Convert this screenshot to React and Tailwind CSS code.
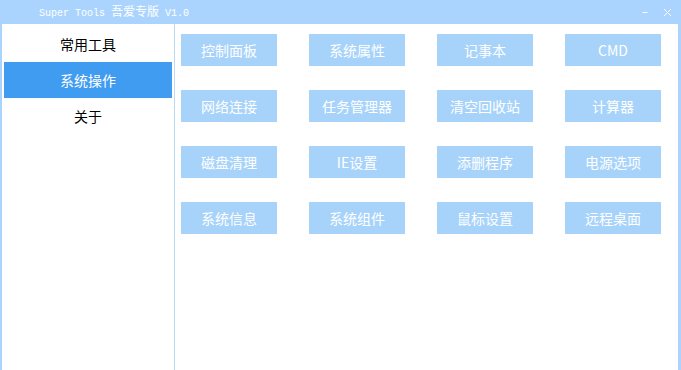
import React, { useState } from "react";

const menus = ["常用工具", "系统操作", "关于"];

const tools = [
  "控制面板", "系统属性", "记事本", "CMD",
  "网络连接", "任务管理器", "清空回收站", "计算器",
  "磁盘清理", "IE设置", "添删程序", "电源选项",
  "系统信息", "系统组件", "鼠标设置", "远程桌面",
];

const cjk = { fontFamily: '"Noto Sans CJK SC", "Noto Sans", sans-serif' };

const App = () => {
  const [active, setActive] = useState(1);

  return (
    <div className="w-[681px] h-[370px] bg-[#aad4fd] flex flex-col overflow-hidden">
      {/* title bar */}
      <div className="h-6 flex items-center pl-[39px] pr-[9px] text-white">
        <div className="flex items-baseline whitespace-pre leading-none">
          <span className="text-[10px]" style={{ fontFamily: '"Liberation Mono", monospace' }}>Super Tools </span>
          <span className="text-[12px]" style={cjk}>吾爱专版</span>
          <span className="text-[10px]" style={{ fontFamily: '"Liberation Mono", monospace' }}> V1.0</span>
        </div>
        <div className="ml-auto flex items-center gap-[14px]">
          <svg width="8" height="8" viewBox="0 0 8 8">
            <path d="M1.5 4.5h5" stroke="#fff" strokeWidth="1" />
          </svg>
          <svg width="9" height="9" viewBox="0 0 9 9">
            <path d="M1 1l7 7M8 1l-7 7" stroke="#fff" strokeWidth="1" />
          </svg>
        </div>
      </div>

      {/* body */}
      <div className="flex-1 flex ml-[2px] mr-[3px] bg-white">
        <div className="w-[173px] border-r border-[#b9d8f6] px-[2px] pt-[2px]">
          {menus.map((m, i) => (
            <div
              key={m}
              onClick={() => setActive(i)}
              className={`h-9 flex items-center justify-center text-[14px] ${
                active === i ? "bg-[#3f9cf1] text-white" : "text-black"
              }`}
              style={cjk}
            >
              {m}
            </div>
          ))}
        </div>
        <div className="flex-1 pl-[6px] pt-[10px]">
          <div className="grid grid-cols-[repeat(4,96px)] auto-rows-[32px] gap-x-8 gap-y-6">
            {tools.map((t) => (
              <div
                key={t}
                className="bg-[#a7d3fa] text-white text-[14px] flex items-center justify-center"
                style={cjk}
              >
                {t}
              </div>
            ))}
          </div>
        </div>
      </div>
    </div>
  );
};

export default App;
